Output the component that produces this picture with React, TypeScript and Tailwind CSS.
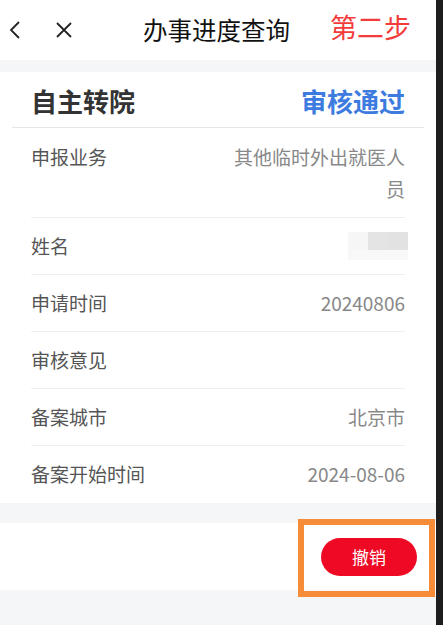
import React from "react";

const rows = [
  { label: "申报业务", value: "其他临时外出就医人员" },
  { label: "姓名", value: "" },
  { label: "申请时间", value: "20240806" },
  { label: "审核意见", value: "" },
  { label: "备案城市", value: "北京市" },
  { label: "备案开始时间", value: "2024-08-06" },
];

const font = { fontFamily: '"Noto Sans CJK SC", "Noto Sans", sans-serif' };

export default function App() {
  return (
    <div className="flex h-[625px] w-[443px] overflow-hidden" style={font}>
      <div className="relative flex w-[436px] flex-col bg-[#f5f6f8]">
        {/* Header */}
        <header className="relative flex h-[60px] items-center bg-white">
          <svg className="ml-[9px] h-[20px] w-[12px]" viewBox="0 0 12 20" fill="none" stroke="#222" strokeWidth="1.8">
            <path d="M10 2 L2 10 L10 18" />
          </svg>
          <svg className="ml-[34px] h-[18px] w-[18px]" viewBox="0 0 18 18" fill="none" stroke="#222" strokeWidth="1.8">
            <path d="M2 2 L16 16 M16 2 L2 16" />
          </svg>
          <h1 className="absolute left-[143px] top-[12px] text-[24.5px] leading-[36px] text-[#111]">办事进度查询</h1>
          <span className="absolute left-[330px] top-[8px] text-[27px] leading-[38px] text-[#f33b3b]">第二步</span>
        </header>

        {/* Card */}
        <section className="mt-[12px] bg-white">
          <div className="mx-[12px] flex h-[56px] items-center justify-between border-b border-[#e6e6e6] px-[19px] pt-[1px]">
            <span className="text-[26px] font-bold text-[#333]">自主转院</span>
            <span className="text-[26px] font-bold text-[#3d7be0]">审核通过</span>
          </div>
          <div className="px-[31px]">
            {rows.map((r, i) => (
              <div
                key={r.label}
                className={
                  "flex justify-between gap-6 text-[19px] leading-[32px] " +
                  (i === 0 ? "pt-[13px] pb-[12px]" : "py-[12px]") +
                  (i < rows.length - 1 ? " border-b border-[#efefef]" : " pb-[13px]")
                }
              >
                <span className="shrink-0 text-[#555]">{r.label}</span>
                {r.label === "姓名" ? (
                  <div className="mr-[-3px] flex h-[32px] w-[60px] flex-col justify-center">
                    <div className="flex h-[18px]">
                      <div className="w-[20px] bg-[#f6f6f6]" />
                      <div className="w-[20px] bg-[#e4e4e4]" />
                      <div className="w-[20px] bg-[#e2e2e2]" />
                    </div>
                    <div className="h-[10px] bg-[#f8f8f8]" />
                  </div>
                ) : (
                  <span className="max-w-[176px] text-right text-[#888]">{r.value}</span>
                )}
              </div>
            ))}
          </div>
        </section>

        {/* Footer action bar */}
        <div className="mt-[20px] flex h-[67px] items-center justify-end bg-white pr-[19px]">
          <button className="h-[38px] w-[96px] rounded-full bg-[#ee0a24] text-[17px] text-white">撤销</button>
        </div>

        {/* annotation box */}
        <div className="absolute left-[298px] top-[519px] h-[78px] w-[137px] border-[6px] border-[#f68b38]" />
      </div>
      <div className="flex-1 bg-[#1e1e1e]" />
    </div>
  );
}
